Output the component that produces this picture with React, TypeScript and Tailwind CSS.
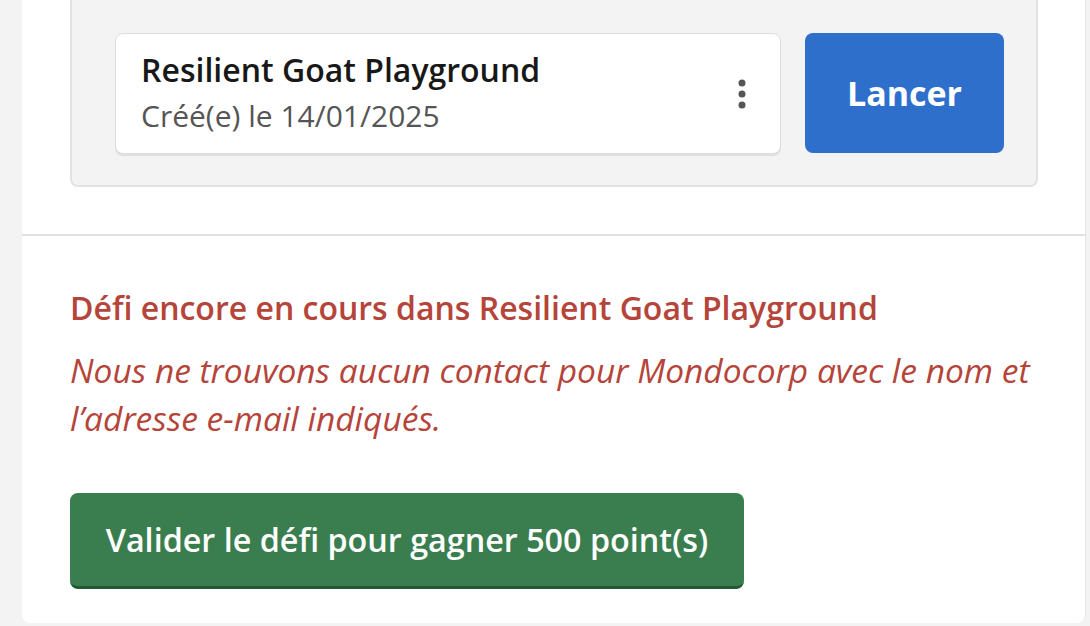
export default function App() {
  const font = { fontFamily: '"Open Sans", "Liberation Sans", sans-serif' };
  return (
    <div className="w-[1090px] h-[626px] bg-[#f3f3f3] flex overflow-hidden" style={font}>
      <div className="ml-[22px] w-[1064px] h-[623px] bg-white border-r border-[#e5e5e5] rounded-b-lg flex flex-col">
        <div className="px-[48px]">
          <div className="w-[968px] h-[187px] bg-[#f3f3f3] border-x-2 border-b-2 border-[#e2e2e2] rounded-b-lg flex items-start pt-[33px] pl-[43px] gap-[24px]">
            <div className="w-[666px] h-[121px] bg-white border border-[#dddddd] rounded-lg shadow-[0_2px_0_#e0e0e0] flex items-center justify-between pl-[25px] pr-[33px]">
              <div className="flex flex-col">
                <div className="text-[32px] leading-[44px] font-semibold text-[#181818]">Resilient Goat Playground</div>
                <div className="text-[30px] leading-[47px] text-[#555555]">Créé(e) le 14/01/2025</div>
              </div>
              <svg width="10" height="30" viewBox="0 0 10 30">
                <circle cx="5" cy="4" r="3.5" fill="#555" />
                <circle cx="5" cy="15" r="3.5" fill="#555" />
                <circle cx="5" cy="26" r="3.5" fill="#555" />
              </svg>
            </div>
            <button className="w-[199px] h-[120px] bg-[#2f6fcc] rounded-lg text-white text-[34px] font-bold flex items-center justify-center">
              Lancer
            </button>
          </div>
        </div>
        <div className="mt-[47px] h-[2px] bg-[#e2e2e2]" />
        <div className="px-[48px] pt-[52px]">
          <div className="text-[32px] leading-[40px] font-semibold text-[#b5443a]">
            Défi encore en cours dans Resilient Goat Playground
          </div>
          <div className="mt-[18px] w-[968px] text-[33.5px] leading-[48px] italic text-[#b5443a]">
            Nous ne trouvons aucun contact pour Mondocorp avec le nom et l’adresse e-mail indiqués.
          </div>
          <button className="mt-[51px] w-[674px] h-[96px] bg-[#3a7e50] border-b-[3px] border-[#1f5a30] rounded-lg text-white text-[32.3px] font-semibold flex items-center justify-center">
            Valider le défi pour gagner 500 point(s)
          </button>
        </div>
      </div>
    </div>
  );
}
